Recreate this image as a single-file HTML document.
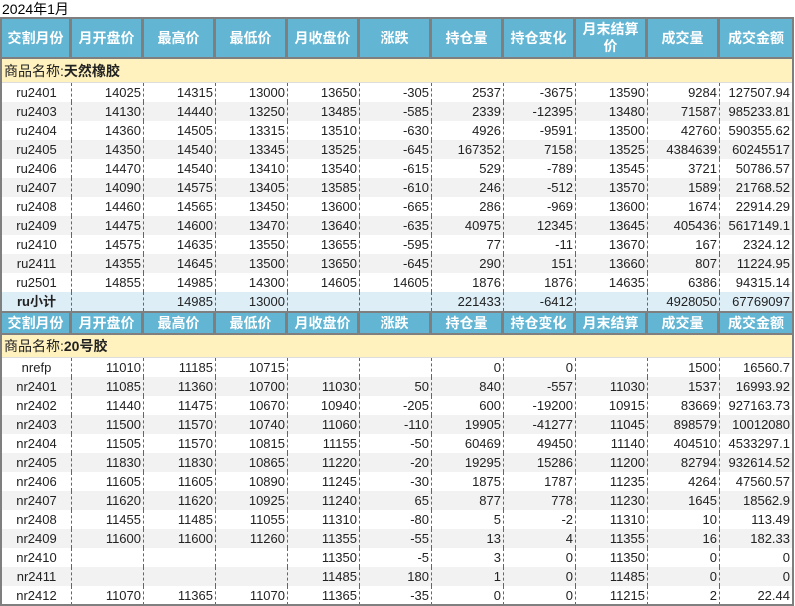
<!DOCTYPE html>
<html><head><meta charset="utf-8"><style>
*{margin:0;padding:0;box-sizing:border-box}
body{width:795px;height:606px;overflow:hidden;background:#fff;font-family:"Liberation Sans","Noto Sans CJK SC",sans-serif;font-size:13px;color:#222;position:relative}
.t{height:17px;line-height:18px;font-size:14px;padding-left:2px;color:#000}
.wrap{position:absolute;left:0;top:17px;width:794px;border-left:2px solid #7f7f7f;border-right:2px solid #7f7f7f;border-bottom:2px solid #7f7f7f;height:589px;overflow:hidden}
.r{display:flex;height:19px;line-height:19px}
.r span{width:72px;text-align:right;padding-right:2px;border-right:1px dashed #666;white-space:nowrap;overflow:hidden}
.r span:first-child{text-align:center;padding:0;width:70px}
.r span:last-child{border-right:none}
.g{background:#f2f2f2}
.h{display:flex;background:#62b6d3;color:#fff;font-weight:bold;font-size:14px;border-top:2px solid #7f7f7f;border-bottom:2px solid #7f7f7f}
.h span{width:72px;border-right:3px solid #7f7f7f;text-align:center;display:flex;align-items:center;justify-content:center;line-height:17px}
.h span:first-child{width:70px}
.h span:last-child{border-right:none}
.s{height:24px;line-height:24px;background:#fff2bf;font-size:14px;padding-left:2px;border-bottom:1px solid #ddd}
.sub{background:#ddeef7;font-weight:bold}
</style></head><body>
<div class="t">2024年1月</div>
<div class="wrap">
<div class="h" style="height:42px"><span>交割月份</span><span>月开盘价</span><span>最高价</span><span>最低价</span><span>月收盘价</span><span>涨跌</span><span>持仓量</span><span>持仓变化</span><span>月末结算<br>价</span><span>成交量</span><span>成交金额</span></div>
<div class="s">商品名称:<b>天然橡胶</b></div>
<div class="r"><span>ru2401</span><span>14025</span><span>14315</span><span>13000</span><span>13650</span><span>-305</span><span>2537</span><span>-3675</span><span>13590</span><span>9284</span><span>127507.94</span></div>
<div class="r g"><span>ru2403</span><span>14130</span><span>14440</span><span>13250</span><span>13485</span><span>-585</span><span>2339</span><span>-12395</span><span>13480</span><span>71587</span><span>985233.81</span></div>
<div class="r"><span>ru2404</span><span>14360</span><span>14505</span><span>13315</span><span>13510</span><span>-630</span><span>4926</span><span>-9591</span><span>13500</span><span>42760</span><span>590355.62</span></div>
<div class="r g"><span>ru2405</span><span>14350</span><span>14540</span><span>13345</span><span>13525</span><span>-645</span><span>167352</span><span>7158</span><span>13525</span><span>4384639</span><span>60245517</span></div>
<div class="r"><span>ru2406</span><span>14470</span><span>14540</span><span>13410</span><span>13540</span><span>-615</span><span>529</span><span>-789</span><span>13545</span><span>3721</span><span>50786.57</span></div>
<div class="r g"><span>ru2407</span><span>14090</span><span>14575</span><span>13405</span><span>13585</span><span>-610</span><span>246</span><span>-512</span><span>13570</span><span>1589</span><span>21768.52</span></div>
<div class="r"><span>ru2408</span><span>14460</span><span>14565</span><span>13450</span><span>13600</span><span>-665</span><span>286</span><span>-969</span><span>13600</span><span>1674</span><span>22914.29</span></div>
<div class="r g"><span>ru2409</span><span>14475</span><span>14600</span><span>13470</span><span>13640</span><span>-635</span><span>40975</span><span>12345</span><span>13645</span><span>405436</span><span>5617149.1</span></div>
<div class="r"><span>ru2410</span><span>14575</span><span>14635</span><span>13550</span><span>13655</span><span>-595</span><span>77</span><span>-11</span><span>13670</span><span>167</span><span>2324.12</span></div>
<div class="r g"><span>ru2411</span><span>14355</span><span>14645</span><span>13500</span><span>13650</span><span>-645</span><span>290</span><span>151</span><span>13660</span><span>807</span><span>11224.95</span></div>
<div class="r"><span>ru2501</span><span>14855</span><span>14985</span><span>14300</span><span>14605</span><span>14605</span><span>1876</span><span>1876</span><span>14635</span><span>6386</span><span>94315.14</span></div>
<div class="r sub"><span>ru小计</span><span></span><span style="font-weight:normal">14985</span><span style="font-weight:normal">13000</span><span></span><span></span><span style="font-weight:normal">221433</span><span style="font-weight:normal">-6412</span><span></span><span style="font-weight:normal">4928050</span><span style="font-weight:normal">67769097</span></div>
<div class="h" style="height:24px"><span>交割月份</span><span>月开盘价</span><span>最高价</span><span>最低价</span><span>月收盘价</span><span>涨跌</span><span>持仓量</span><span>持仓变化</span><span>月末结算</span><span>成交量</span><span>成交金额</span></div>
<div class="s" style="height:23px;line-height:23px">商品名称:<b>20号胶</b></div>
<div class="r"><span>nrefp</span><span>11010</span><span>11185</span><span>10715</span><span></span><span></span><span>0</span><span>0</span><span></span><span>1500</span><span>16560.7</span></div>
<div class="r g"><span>nr2401</span><span>11085</span><span>11360</span><span>10700</span><span>11030</span><span>50</span><span>840</span><span>-557</span><span>11030</span><span>1537</span><span>16993.92</span></div>
<div class="r"><span>nr2402</span><span>11440</span><span>11475</span><span>10670</span><span>10940</span><span>-205</span><span>600</span><span>-19200</span><span>10915</span><span>83669</span><span>927163.73</span></div>
<div class="r g"><span>nr2403</span><span>11500</span><span>11570</span><span>10740</span><span>11060</span><span>-110</span><span>19905</span><span>-41277</span><span>11045</span><span>898579</span><span>10012080</span></div>
<div class="r"><span>nr2404</span><span>11505</span><span>11570</span><span>10815</span><span>11155</span><span>-50</span><span>60469</span><span>49450</span><span>11140</span><span>404510</span><span>4533297.1</span></div>
<div class="r g"><span>nr2405</span><span>11830</span><span>11830</span><span>10865</span><span>11220</span><span>-20</span><span>19295</span><span>15286</span><span>11200</span><span>82794</span><span>932614.52</span></div>
<div class="r"><span>nr2406</span><span>11605</span><span>11605</span><span>10890</span><span>11245</span><span>-30</span><span>1875</span><span>1787</span><span>11235</span><span>4264</span><span>47560.57</span></div>
<div class="r g"><span>nr2407</span><span>11620</span><span>11620</span><span>10925</span><span>11240</span><span>65</span><span>877</span><span>778</span><span>11230</span><span>1645</span><span>18562.9</span></div>
<div class="r"><span>nr2408</span><span>11455</span><span>11485</span><span>11055</span><span>11310</span><span>-80</span><span>5</span><span>-2</span><span>11310</span><span>10</span><span>113.49</span></div>
<div class="r g"><span>nr2409</span><span>11600</span><span>11600</span><span>11260</span><span>11355</span><span>-55</span><span>13</span><span>4</span><span>11355</span><span>16</span><span>182.33</span></div>
<div class="r"><span>nr2410</span><span></span><span></span><span></span><span>11350</span><span>-5</span><span>3</span><span>0</span><span>11350</span><span>0</span><span>0</span></div>
<div class="r g"><span>nr2411</span><span></span><span></span><span></span><span>11485</span><span>180</span><span>1</span><span>0</span><span>11485</span><span>0</span><span>0</span></div>
<div class="r"><span>nr2412</span><span>11070</span><span>11365</span><span>11070</span><span>11365</span><span>-35</span><span>0</span><span>0</span><span>11215</span><span>2</span><span>22.44</span></div>
</div>
</body></html>
